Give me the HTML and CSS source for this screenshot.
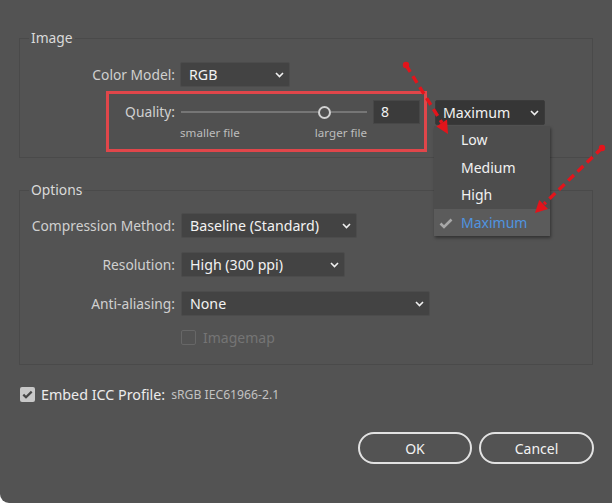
FILE: index.html
```html
<!DOCTYPE html>
<html>
<head>
<meta charset="utf-8">
<title>JPEG Options</title>
<link rel="stylesheet" href="styles.css">
</head>
<body>
<div class="dialog">
  <fieldset class="group group-image">
    <legend>Image</legend>
    <div class="row">
      <span class="lbl">Color Model:</span>
      <div class="select w-rgb"><span>RGB</span><svg class="chev" width="9" height="6" viewBox="0 0 9 6"><path d="M1 1 L4.5 4.5 L8 1"/></svg></div>
    </div>
    <div class="quality-row">
      <div class="highlight">
        <div class="quality">
          <span class="lbl lbl-q">Quality:</span>
          <div class="slider">
            <div class="track"><span class="seg seg-left"></span><span class="knob"></span><span class="seg seg-right"></span></div>
            <div class="ticks"><span>smaller file</span><span>larger file</span></div>
          </div>
          <div class="num">8</div>
        </div>
      </div>
      <div class="select-wrap">
        <div class="select open w-max"><span>Maximum</span><svg class="chev" width="9" height="6" viewBox="0 0 9 6"><path d="M1 1 L4.5 4.5 L8 1"/></svg></div>
        <ul class="menu">
          <li>Low</li>
          <li>Medium</li>
          <li>High</li>
          <li class="selected"><svg class="check" width="14" height="11" viewBox="0 0 14 11"><path d="M1.5 5.5 L5 9 L12.5 1.5"/></svg>Maximum</li>
        </ul>
      </div>
    </div>
  </fieldset>

  <fieldset class="group group-options">
    <legend>Options</legend>
    <div class="row orow">
      <span class="lbl">Compression Method:</span>
      <div class="select w-comp"><span>Baseline (Standard)</span><svg class="chev" width="9" height="6" viewBox="0 0 9 6"><path d="M1 1 L4.5 4.5 L8 1"/></svg></div>
    </div>
    <div class="row orow">
      <span class="lbl">Resolution:</span>
      <div class="select w-res"><span>High (300 ppi)</span><svg class="chev" width="9" height="6" viewBox="0 0 9 6"><path d="M1 1 L4.5 4.5 L8 1"/></svg></div>
    </div>
    <div class="row orow">
      <span class="lbl">Anti-aliasing:</span>
      <div class="select w-aa"><span>None</span><svg class="chev" width="9" height="6" viewBox="0 0 9 6"><path d="M1 1 L4.5 4.5 L8 1"/></svg></div>
    </div>
    <div class="row orow imagemap-row">
      <span class="lbl"></span>
      <span class="cb cb-off"></span><span class="dim">Imagemap</span>
    </div>
  </fieldset>

  <div class="embed">
    <span class="cb cb-on"><svg width="11" height="9" viewBox="0 0 11 9"><path d="M1.3 4.6 L4 7.3 L9.7 1.6"/></svg></span>
    <span class="embed-lbl">Embed ICC Profile:</span>
    <span class="profile">sRGB IEC61966-2.1</span>
  </div>

  <div class="buttons">
    <button class="btn btn-ok">OK</button>
    <button class="btn btn-cancel">Cancel</button>
  </div>

  <svg class="annot" width="612" height="503" viewBox="0 0 612 503">
    <g fill="#e3141b" stroke="#e3141b">
      <circle cx="406" cy="65" r="3.2" stroke="none"/>
      <line x1="406" y1="65" x2="442" y2="123" stroke-width="3.4" stroke-dasharray="8 5" fill="none"/>
      <polygon points="448,134 436.4,126.4 447,119.6" stroke="none"/>
      <circle cx="602" cy="148" r="3.2" stroke="none"/>
      <line x1="602" y1="148" x2="544" y2="204" stroke-width="3.4" stroke-dasharray="8 5" fill="none"/>
      <polygon points="535,213 539.2,200 548,209" stroke="none"/>
    </g>
  </svg>
</div>
</body>
</html>
```

FILE: styles.css
```css
html, body {
  margin: 0;
  background: #ffffff;
}

.dialog {
  position: relative;
  width: 612px;
  height: 503px;
  box-sizing: border-box;
  padding: 30px 19px 0 19px;
  background: #535353;
  border-bottom-left-radius: 9px;
  font-family: "Segoe UI", "Noto Sans", "Open Sans", sans-serif;
  font-size: 13.8px;
  color: #d2d2d2;
  display: flex;
  flex-direction: column;
  overflow: hidden;
}

.group {
  margin: 0;
  border: 1px solid #4a4a4a;
  min-width: 0;
}

.group legend {
  margin-left: 9px;
  padding: 0 2px;
  font-size: 13.8px;
  line-height: 16px;
  color: #dadada;
}

.group-image {
  padding: 16px 0 5px 0;
}

.group-options {
  margin-top: 24px;
  padding: 15px 0 19px 0;
}

.row {
  display: flex;
  align-items: center;
  gap: 5px;
  height: 25px;
}

.orow {
  gap: 6px;
  margin-bottom: 14px;
}

.orow:last-child {
  margin-bottom: 0;
}

.lbl {
  width: 155px;
  text-align: right;
  flex: none;
  color: #d0d0d0;
  font-size: 13.8px;
}

.select {
  display: flex;
  align-items: center;
  justify-content: space-between;
  height: 25px;
  box-sizing: border-box;
  padding: 0 5px 0 8px;
  background: #434343;
  border: 1px solid #4c4c4c;
  border-radius: 2px;
  color: #f2f2f2;
  font-size: 14.2px;
}

.select.open {
  background: #363636;
  border-color: #3b3b3b;
  padding-left: 7px;
}

.chev {
  flex: none;
}

.chev path {
  fill: none;
  stroke: #f0f0f0;
  stroke-width: 1.6;
}

.w-rgb { width: 110px; }
.w-max { width: 110px; }
.w-comp { width: 176px; }
.w-res { width: 164px; }
.w-aa { width: 249px; }

.quality-row {
  display: flex;
  align-items: flex-start;
  margin-top: 4px;
}

.highlight {
  margin-left: 86px;
  border: 3px solid #e0464a;
  width: 315px;
  height: 55px;
  background: #505050;
}

.quality {
  display: flex;
  align-items: flex-start;
  padding-top: 6px;
}

.lbl-q {
  width: 66px;
  line-height: 24px;
}

.slider {
  width: 187px;
  margin-left: 5px;
}

.track {
  height: 24px;
  display: flex;
  align-items: center;
  padding-left: 1px;
}

.seg {
  height: 2px;
  background: #767676;
}

.seg-left {
  width: 137px;
}

.seg-right {
  flex: 1;
}

.knob {
  width: 13px;
  height: 13px;
  box-sizing: border-box;
  border: 2.5px solid #d2d2d2;
  border-radius: 50%;
  background: #505050;
  flex: none;
}

.ticks {
  display: flex;
  justify-content: space-between;
  margin-top: 2px;
  font-size: 11.6px;
  line-height: 14px;
  color: #bdbdbd;
}

.num {
  margin-left: 6px;
  width: 47px;
  height: 24px;
  box-sizing: border-box;
  padding-left: 7px;
  background: #3b3b3b;
  border: 1px solid #474747;
  color: #f2f2f2;
  font-size: 14px;
  line-height: 22px;
}

.select-wrap {
  position: relative;
  margin-left: 8px;
  margin-top: 9px;
}

.menu {
  position: absolute;
  left: -1px;
  top: 26px;
  width: 116px;
  margin: 0;
  padding: 0;
  list-style: none;
  background: #4d4d4d;
  box-shadow: 1px 2px 3px rgba(0, 0, 0, 0.4);
  font-size: 14px;
  color: #f2f2f2;
}

.menu li {
  position: relative;
  height: 27.5px;
  line-height: 27.5px;
  padding-left: 27px;
}

.menu li.selected {
  background: #5b5b5b;
  color: #4f94e0;
}

.check {
  position: absolute;
  left: 5px;
  top: 9px;
}

.check path {
  fill: none;
  stroke: #a8a8a8;
  stroke-width: 2.6;
}

.imagemap-row {
  height: 15px;
  gap: 0;
}

.imagemap-row .lbl {
  width: 161px;
}

.cb {
  width: 15px;
  height: 15px;
  box-sizing: border-box;
  border-radius: 2px;
  flex: none;
  display: flex;
  align-items: center;
  justify-content: center;
}

.cb-off {
  border: 1px solid #676767;
}

.dim {
  margin-left: 7px;
  color: #757575;
  font-size: 14px;
}

.embed {
  display: flex;
  align-items: center;
  margin-top: 21px;
  margin-left: 1px;
  height: 16px;
}

.cb-on {
  background: #c8c8c8;
}

.cb-on path {
  fill: none;
  stroke: #474747;
  stroke-width: 2.2;
}

.embed-lbl {
  margin-left: 6px;
  font-size: 14.3px;
  color: #ececec;
}

.profile {
  margin-left: 6px;
  font-size: 12.2px;
  color: #c2c2c2;
}

.buttons {
  display: flex;
  justify-content: flex-end;
  gap: 7px;
  margin-top: 30px;
  margin-right: -1px;
}

.btn {
  height: 32px;
  box-sizing: border-box;
  border: 2px solid #e2e2e2;
  border-radius: 16px;
  background: transparent;
  color: #f2f2f2;
  font-family: inherit;
  font-size: 14px;
  padding: 0;
}

.btn-ok { width: 114px; }
.btn-cancel { width: 115px; }

.annot {
  position: absolute;
  left: 0;
  top: 0;
  pointer-events: none;
}
```
